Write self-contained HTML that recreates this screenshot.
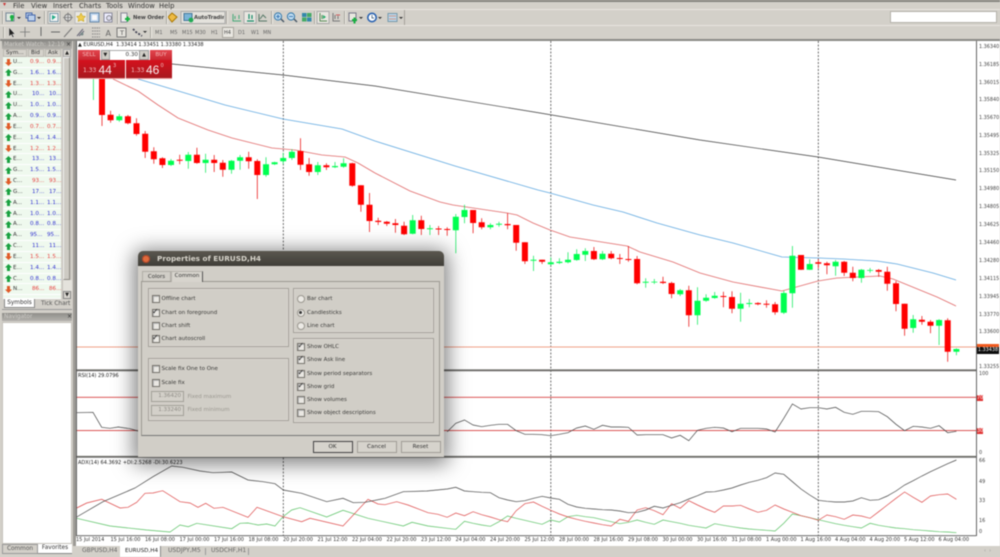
<!DOCTYPE html>
<html><head><meta charset="utf-8"><style>
html,body{margin:0;padding:0;background:#d3d0c9;overflow:hidden}
#r{position:relative;width:1000px;height:557px;overflow:hidden;background:#d3d0c9;font-family:"DejaVu Sans","Liberation Sans",sans-serif;color:#333;filter:blur(.42px)}
#r div,#r span.a,#r svg.a{position:absolute}
.t{white-space:nowrap}
.m{top:1.5px;font-size:6.8px;line-height:8px;color:#333}
.tb{font-size:5px;top:29px;line-height:8px;color:#666}
.sep{width:1px;background:#aaa7a0;border-right:1px solid #efece6}
.hl{background:#e9e7e1;border:1px solid #a9a69f;box-sizing:border-box}
.row{left:3px;width:58px;height:10.83px;background:#eff9ee;border-bottom:1px solid #fff;box-sizing:border-box}
.c{top:0;font-size:5.6px;line-height:10px;white-space:nowrap}
.b{color:#3030d0}.d{color:#e84040}
.p{left:979px;font-size:4.9px;line-height:6px;color:#444;white-space:nowrap}
.x{top:537px;font-size:5px;line-height:6px;color:#333;white-space:nowrap}
.gb{border:1px solid #a3a099;box-shadow:inset 0 0 0 .5px #e6e3dc;box-sizing:border-box}
.cb{width:6px;height:6px;background:#e9e7e2;border:1px solid #77746e;box-shadow:inset 1px 1px 0 #bbb;box-sizing:content-box}
.rd{width:6px;height:6px;background:#eceae5;border:1px solid #9a978f;border-radius:50%}
.l{font-size:5.5px;line-height:8px;color:#3a3a38;white-space:nowrap}
.bt{top:441px;height:12px;width:40px;box-sizing:border-box;border:1px solid #a09d96;background:#d6d3cc;font-size:5.6px;line-height:11px;text-align:center;color:#333}
.ct{top:547px;font-size:6px;line-height:8px;color:#444;white-space:nowrap}
.n{font-family:"Liberation Sans",sans-serif;font-size:12px;line-height:14px;color:#f8eeee;top:62.500px;white-space:nowrap}
</style></head><body><div id="r">
<svg width="0" height="0" style="position:absolute"><defs>
<symbol id="u" viewBox="0 0 7 7"><path d="M3.5 0 7 3.5H5V7H2V3.5H0z" fill="#19a040"/></symbol>
<symbol id="o" viewBox="0 0 7 7"><path d="M3.5 7 7 3.5H5V0H2V3.5H0z" fill="#e05a28"/></symbol>
</defs></svg>

<!-- top -->
<div style="left:0;top:0;width:1000px;height:1.5px;background:#85847f"></div>
<div style="left:0;top:9px;width:1000px;height:1px;background:#e8e5df"></div>
<div style="left:0;top:25px;width:1000px;height:1px;background:#e8e5df"></div>
<div style="left:0;top:38.5px;width:1000px;height:2px;background:#8a8985"></div>
<div style="left:3px;top:2px;width:3px;height:6px;color:#c33;font-size:6px;line-height:6px">▾</div>
<div class="m t" style="left:13px">File</div><div class="m t" style="left:31px">View</div><div class="m t" style="left:53px">Insert</div><div class="m t" style="left:79px">Charts</div><div class="m t" style="left:106px">Tools</div><div class="m t" style="left:128px">Window</div><div class="m t" style="left:159px">Help</div>

<!-- toolbar 1 -->
<div style="left:404px;top:10px;width:1px;height:15px;background:#a5a29b"></div>
<div class="sep" style="left:2px;top:11px;height:13px"></div>
<svg class="a" style="left:0;top:10px" width="405" height="15" viewBox="0 10 405 15">
<rect x="6" y="13" width="8" height="8" fill="#dfe8e0" stroke="#789"/><path d="M10 17h4M12 15v6" stroke="#18b040" stroke-width="2.4"/>
<path d="M17 17h4l-2 2z" fill="#333"/>
<rect x="26" y="13" width="6" height="5" fill="#bcd0ea" stroke="#46a"/><rect x="28" y="15" width="7" height="6" fill="#bcd0ea" stroke="#46a"/><path d="M37 17h4l-2 2z" fill="#333"/>
<rect x="48" y="11.5" width="12" height="12" fill="#e9e7e1" stroke="#aaa"/><rect x="50" y="13.5" width="8" height="8" fill="#f5f5f5" stroke="#79a"/><path d="M52 15l4 2-4 3z" fill="#2a8"/>
<circle cx="68" cy="17.5" r="3.4" fill="#ddd" stroke="#777"/><path d="M68 12.5v10M63 17.5h10" stroke="#777" stroke-width=".8"/>
<rect x="75" y="11.5" width="12" height="12" fill="#e9e7e1" stroke="#bbb"/><path d="M81 13l1.500 3 3 .5-2.200 2 .6 3-2.900-1.500-2.900 1.500.6-3-2.200-2 3-.5z" fill="#f0cc50" stroke="#b90" stroke-width=".5"/>
<rect x="90" y="13" width="9" height="9" fill="#bcd4ee" stroke="#68a"/><rect x="92" y="15" width="5" height="5" fill="#f8f8f8"/>
<rect x="104" y="13" width="8" height="9" fill="#eef" stroke="#889"/><circle cx="109" cy="18" r="2.400" fill="#dde" stroke="#666" stroke-width=".7"/>
<rect x="121" y="13" width="6" height="9" fill="#eee" stroke="#889"/><path d="M125 19h5M127.500 16.500v5" stroke="#18b040" stroke-width="2"/>
<path d="M172 13l5 4-5 5-4-5z" fill="#eebb44" stroke="#a70"/>
<rect x="181" y="11.500" width="44" height="12" fill="#e4e2dc" stroke="#aaa"/><rect x="184" y="13.500" width="8" height="7" fill="#7ab4d8" stroke="#479"/><circle cx="191" cy="20" r="2.400" fill="#2a5"/>
<path d="M233 14v7h8M235 16v3M239 15v4" stroke="#4a7" fill="none"/>
<rect x="244" y="11.500" width="12" height="12" fill="#e9e7e1" stroke="#aaa"/><path d="M247 21h7M249 14v5M252 15v4" stroke="#186" fill="none" stroke-width="1.200"/>
<path d="M259 14v7h8M260 19l3-4 3 3" stroke="#576" fill="none"/>
<circle cx="278" cy="16.500" r="3.600" fill="#bfdcf0" stroke="#37a"/><path d="M281 19l3 3" stroke="#456" stroke-width="1.400"/><path d="M276 16.500h4M278 14.500v4" stroke="#26a" stroke-width=".8"/>
<circle cx="291" cy="16.500" r="3.600" fill="#bfdcf0" stroke="#37a"/><path d="M294 19l3 3" stroke="#456" stroke-width="1.400"/><path d="M289 16.500h4" stroke="#26a" stroke-width=".8"/>
<rect x="302" y="13" width="4.500" height="4" fill="#38a"/><rect x="307" y="13" width="4.500" height="4" fill="#4a6"/><rect x="302" y="17.500" width="4.500" height="4" fill="#4a6"/><rect x="307" y="17.500" width="4.500" height="4" fill="#38a"/>
<rect x="317" y="11.500" width="12" height="12" fill="#e9e7e1" stroke="#aaa"/><path d="M320 13v8h7M322 15v4" stroke="#585" fill="none"/><path d="M323 15l3 2-3 2z" fill="#2a6"/>
<path d="M333 13v8h7M335 15v4M338 16v3" stroke="#777" fill="none"/><path d="M336 15h4" stroke="#c55"/>
<rect x="349" y="13" width="7" height="8" fill="#e8e8e0" stroke="#778"/><path d="M352 20h5M354.500 17.500v6" stroke="#18b040" stroke-width="2"/><path d="M359 17h4l-2 2z" fill="#333"/>
<circle cx="372" cy="17.500" r="4.200" fill="#fff" stroke="#2a62b0" stroke-width="1.600"/><path d="M372 15v3h2" stroke="#246" fill="none" stroke-width=".7"/><path d="M378 17h4l-2 2z" fill="#333"/>
<rect x="388" y="13.500" width="9" height="8" fill="#bcd6ec" stroke="#79a"/><path d="M389 16h7M389 19h7" stroke="#c98"/><path d="M399 17h4l-2 2z" fill="#333"/>
</svg>
<div class="t" style="left:133px;top:13.500px;font-size:5.300px;line-height:8px;font-weight:bold;color:#444;letter-spacing:-.1px">New Order</div>
<div class="t" style="left:194px;top:13.500px;font-size:5.300px;line-height:8px;font-weight:bold;color:#444;letter-spacing:-.1px;width:30px;overflow:hidden">AutoTrading</div>
<div class="sep" style="left:44px;top:11px;height:13px"></div><div class="sep" style="left:117px;top:11px;height:13px"></div><div class="sep" style="left:166px;top:11px;height:13px"></div><div class="sep" style="left:226px;top:11px;height:13px"></div><div class="sep" style="left:271px;top:11px;height:13px"></div><div class="sep" style="left:314px;top:11px;height:13px"></div><div class="sep" style="left:344px;top:11px;height:13px"></div>
<div style="left:890px;top:11px;width:107px;height:12px;background:#fff;border:1px solid #b5b2ab;box-sizing:border-box"></div>

<!-- toolbar 2 -->
<div class="sep" style="left:3px;top:27px;height:11px"></div>
<svg class="a" style="left:0;top:26px" width="150" height="13" viewBox="0 26 150 13">
<path d="M9 27.500v9l2.200-2 1.500 3 1.200-.6-1.500-2.800H15z" fill="#222" stroke="#eee" stroke-width=".4"/>
<path d="M25 27v10M20 32h10" stroke="#777" stroke-width=".8"/>
<path d="M41 27v9" stroke="#666"/><path d="M51 32h9" stroke="#666"/><path d="M64 37l8-9" stroke="#777"/>
<path d="M77 36l6-7M79 36l5-5" stroke="#667"/><circle cx="82" cy="34" r="1.500" fill="#788"/>
<path d="M92 28h8M92 31h8M92 34h8M92 37h8" stroke="#888" stroke-dasharray="1.500 .8"/>
<rect x="117" y="28" width="9" height="9" fill="#e4e2dc" stroke="#777"/>
<path d="M133 29l3 3 3 2 3 2" stroke="#445" stroke-width="1.800" stroke-dasharray="2 1.500" fill="none"/><path d="M143 31h4l-2 2z" fill="#333"/>
</svg>
<div class="t" style="left:105.500px;top:28.500px;font-size:8px;line-height:9px;color:#666">A</div>
<div class="t" style="left:120px;top:29.500px;font-size:6.500px;line-height:7px;color:#555">T</div>
<div class="sep" style="left:150px;top:27px;height:11px"></div>
<div class="hl" style="left:221.500px;top:27px;width:12px;height:11px"></div>
<div class="tb" style="left:155px">M1</div><div class="tb" style="left:170px">M5</div><div class="tb" style="left:182px">M15</div><div class="tb" style="left:195px">M30</div><div class="tb" style="left:211px">H1</div><div class="tb" style="left:224px;color:#444">H4</div><div class="tb" style="left:238px">D1</div><div class="tb" style="left:251px">W1</div><div class="tb" style="left:263px">MN</div>

<!-- market watch -->
<div style="left:2px;top:41px;width:70px;height:8px;background:linear-gradient(#8f8e8a,#b3b1ac)"></div>
<div class="t" style="left:4px;top:41px;font-size:5.800px;line-height:8px;color:#cfcdc8">Market Watch: 12:19</div>
<div class="t" style="left:66px;top:41px;font-size:6px;line-height:8px;color:#333">×</div>
<div style="left:3px;top:49px;width:24px;height:8px;background:#d6d3cc;border:1px solid #bdbab3;box-sizing:border-box"></div>
<div style="left:28px;top:49px;width:16px;height:8px;background:#d6d3cc;border:1px solid #bdbab3;box-sizing:border-box"></div>
<div style="left:45px;top:49px;width:16px;height:8px;background:#d6d3cc;border:1px solid #bdbab3;box-sizing:border-box"></div>
<div class="t" style="left:6px;top:49px;font-size:5.600px;line-height:8px">Sym...</div><div class="t" style="left:31px;top:49px;font-size:5.600px;line-height:8px">Bid</div><div class="t" style="left:48px;top:49px;font-size:5.600px;line-height:8px">Ask</div>
<div style="left:62px;top:49px;width:9px;height:250px;background:#c6c3bc"></div>
<div style="left:63px;top:49px;width:8px;height:8px;background:#dad7d0;border:1px solid #aaa;box-sizing:border-box;font-size:5px;line-height:6px;text-align:center;color:#222">▲</div>
<div style="left:63px;top:57px;width:7px;height:223px;background:#cdcac3;border:1px solid #8e8b85;border-left-color:#eee;border-top-color:#eee;box-sizing:border-box"></div>
<div style="left:63px;top:280px;width:9px;height:11px;background:#e4e2dc"></div>
<div style="left:63px;top:291px;width:8px;height:8px;background:#dad7d0;border:1px solid #888;box-sizing:border-box;font-size:5px;line-height:6px;text-align:center;color:#222">▼</div>

<div class="row" style="top:57px"><svg class="a" style="left:2px;top:1.500px" width="7" height="7"><use href="#o"/></svg><span class="c a" style="left:10px">U...</span><span class="c a d" style="left:27px">0.9...</span><span class="c a d" style="left:44px">0.9...</span></div>
<div class="row" style="top:67.830px"><svg class="a" style="left:2px;top:1.500px" width="7" height="7"><use href="#u"/></svg><span class="c a" style="left:10px">G...</span><span class="c a b" style="left:27px">1.6...</span><span class="c a b" style="left:44px">1.6...</span></div>
<div class="row" style="top:78.660px"><svg class="a" style="left:2px;top:1.500px" width="7" height="7"><use href="#o"/></svg><span class="c a" style="left:10px">E...</span><span class="c a d" style="left:27px">1.3...</span><span class="c a d" style="left:44px">1.3...</span></div>
<div class="row" style="top:89.490px"><svg class="a" style="left:2px;top:1.500px" width="7" height="7"><use href="#u"/></svg><span class="c a" style="left:10px">U...</span><span class="c a b" style="left:29px">10...</span><span class="c a b" style="left:46px">10...</span></div>
<div class="row" style="top:100.320px"><svg class="a" style="left:2px;top:1.500px" width="7" height="7"><use href="#u"/></svg><span class="c a" style="left:10px">U...</span><span class="c a b" style="left:27px">1.0...</span><span class="c a b" style="left:44px">1.0...</span></div>
<div class="row" style="top:111.150px"><svg class="a" style="left:2px;top:1.500px" width="7" height="7"><use href="#u"/></svg><span class="c a" style="left:10px">A...</span><span class="c a b" style="left:27px">0.9...</span><span class="c a b" style="left:44px">0.9...</span></div>
<div class="row" style="top:121.980px"><svg class="a" style="left:2px;top:1.500px" width="7" height="7"><use href="#o"/></svg><span class="c a" style="left:10px">E...</span><span class="c a d" style="left:27px">0.7...</span><span class="c a d" style="left:44px">0.7...</span></div>
<div class="row" style="top:132.810px"><svg class="a" style="left:2px;top:1.500px" width="7" height="7"><use href="#u"/></svg><span class="c a" style="left:10px">E...</span><span class="c a b" style="left:27px">1.4...</span><span class="c a b" style="left:44px">1.4...</span></div>
<div class="row" style="top:143.640px"><svg class="a" style="left:2px;top:1.500px" width="7" height="7"><use href="#o"/></svg><span class="c a" style="left:10px">E...</span><span class="c a d" style="left:27px">1.2...</span><span class="c a d" style="left:44px">1.2...</span></div>
<div class="row" style="top:154.470px"><svg class="a" style="left:2px;top:1.500px" width="7" height="7"><use href="#u"/></svg><span class="c a" style="left:10px">E...</span><span class="c a b" style="left:29px">13...</span><span class="c a b" style="left:46px">13...</span></div>
<div class="row" style="top:165.300px"><svg class="a" style="left:2px;top:1.500px" width="7" height="7"><use href="#u"/></svg><span class="c a" style="left:10px">G...</span><span class="c a b" style="left:27px">1.5...</span><span class="c a b" style="left:44px">1.5...</span></div>
<div class="row" style="top:176.130px"><svg class="a" style="left:2px;top:1.500px" width="7" height="7"><use href="#o"/></svg><span class="c a" style="left:10px">C...</span><span class="c a d" style="left:29px">93...</span><span class="c a d" style="left:46px">93...</span></div>
<div class="row" style="top:186.960px"><svg class="a" style="left:2px;top:1.500px" width="7" height="7"><use href="#u"/></svg><span class="c a" style="left:10px">G...</span><span class="c a b" style="left:29px">17...</span><span class="c a b" style="left:46px">17...</span></div>
<div class="row" style="top:197.790px"><svg class="a" style="left:2px;top:1.500px" width="7" height="7"><use href="#u"/></svg><span class="c a" style="left:10px">A...</span><span class="c a b" style="left:27px">1.1...</span><span class="c a b" style="left:44px">1.1...</span></div>
<div class="row" style="top:208.620px"><svg class="a" style="left:2px;top:1.500px" width="7" height="7"><use href="#u"/></svg><span class="c a" style="left:10px">A...</span><span class="c a b" style="left:27px">1.0...</span><span class="c a b" style="left:44px">1.0...</span></div>
<div class="row" style="top:219.450px"><svg class="a" style="left:2px;top:1.500px" width="7" height="7"><use href="#u"/></svg><span class="c a" style="left:10px">A...</span><span class="c a b" style="left:27px">0.8...</span><span class="c a b" style="left:44px">0.8...</span></div>
<div class="row" style="top:230.280px"><svg class="a" style="left:2px;top:1.500px" width="7" height="7"><use href="#u"/></svg><span class="c a" style="left:10px">A...</span><span class="c a b" style="left:27px">95...</span><span class="c a b" style="left:44px">95...</span></div>
<div class="row" style="top:241.110px"><svg class="a" style="left:2px;top:1.500px" width="7" height="7"><use href="#u"/></svg><span class="c a" style="left:10px">C...</span><span class="c a b" style="left:29px">11...</span><span class="c a b" style="left:46px">11...</span></div>
<div class="row" style="top:251.940px"><svg class="a" style="left:2px;top:1.500px" width="7" height="7"><use href="#o"/></svg><span class="c a" style="left:10px">E...</span><span class="c a d" style="left:27px">1.5...</span><span class="c a d" style="left:44px">1.5...</span></div>
<div class="row" style="top:262.770px"><svg class="a" style="left:2px;top:1.500px" width="7" height="7"><use href="#u"/></svg><span class="c a" style="left:10px">E...</span><span class="c a b" style="left:27px">1.4...</span><span class="c a b" style="left:44px">1.4...</span></div>
<div class="row" style="top:273.600px"><svg class="a" style="left:2px;top:1.500px" width="7" height="7"><use href="#u"/></svg><span class="c a" style="left:10px">C...</span><span class="c a b" style="left:27px">0.8...</span><span class="c a b" style="left:44px">0.8...</span></div>
<div class="row" style="top:284.430px"><svg class="a" style="left:2px;top:1.500px" width="7" height="7"><use href="#o"/></svg><span class="c a" style="left:10px">N...</span><span class="c a d" style="left:29px">86...</span><span class="c a d" style="left:46px">86...</span></div>
<div class="row" style="top:295.260px;height:4px"></div>

<div style="left:4px;top:299px;width:31px;height:9px;background:#fff;border:1px solid #888;border-top:none;box-sizing:border-box;text-align:center;font-size:5.800px;line-height:8px;color:#333">Symbols</div>
<div class="t" style="left:41px;top:300px;font-size:5.800px;line-height:8px;color:#555">Tick Chart</div>
<div style="left:2px;top:308.500px;width:70px;height:.8px;background:#999"></div>

<!-- navigator -->
<div style="left:2px;top:313px;width:70px;height:8px;background:linear-gradient(#8f8e8a,#b3b1ac)"></div>
<div class="t" style="left:4px;top:313px;font-size:5.800px;line-height:8px;color:#cfcdc8">Navigator</div>
<div class="t" style="left:67px;top:313px;font-size:6px;line-height:8px;color:#333">×</div>
<div style="left:2px;top:322px;width:70px;height:222px;background:#fff;border:1px solid #c4c1ba;box-sizing:border-box"></div>

<!-- chart area -->
<div style="left:73px;top:41px;width:3px;height:505px;background:#9c9a95"></div>
<div style="left:76px;top:41px;width:924px;height:505px;background:#fff"></div>
<svg class="a" style="left:0;top:0" width="1000" height="557" viewBox="0 0 1000 557" fill="none">
<path d="M283.300 41V536M550.800 41V536M818.300 41V536" stroke="#333" stroke-width=".7" stroke-dasharray="2 1.500"/>
<path d="M76 347H976" stroke="#f0a088" stroke-width=".9"/>
<path d="M172 64L283 75 375 86 540 113 700 140 818 157 956 180" stroke="#3a3a3a" stroke-width=".7"/>
<path d="M138 79L175 90 225 105 283 119 342 129 375 141 455 166 538 190 550 193 593 205 623 212 657 223 700 235 733 243 782 257 818 258 843 259 877 261 897 264 933 273 956 280" stroke="#5fa8e0" stroke-width=".8"/>
<path d="M113 79L138 91 158 105 178 118 208 130 232 138 248 142 272 148 295 150 322 155 345 157 358 163 375 173 410 191 440 202 453 205 507 213 517 215 533 223 550 230 570 237 627 246 640 252 673 262 700 273 733 282 782 291 818 281 837 278 880 276 893 279 937 297 956 306" stroke="#e06868" stroke-width=".8"/>
<!-- green wicks -->
<path stroke="#00e850" stroke-width=".7" d="M93.400 79V100M119.300 114V121.700M171 159V166M188.300 152V168.700M205.600 153.700V172.700M231.500 160V173.700M240.100 155V169.700M266 157.300V176.700M274.600 161.700V165M283.200 152.700V164.300M291.900 149.300V160M317.800 162V175M335 162V168M343.600 158.300V167.700M412.700 215V234.300M429.900 225V235M455.800 214V253.300M464.500 204.700V223.300M490.400 223.300V229.300M499 221.700V226.700M533.500 255.700V271M550.800 257.300V265.300M559.400 258.300V264M568 252.300V263.300M576.700 249.300V260.700M585.300 248.300V261M602.500 251V260M645.700 278.300V287.700M654.300 279V284M680.200 289V296M697.500 287.300V324.700M706.100 294.300V301.700M714.700 292V298.700M740.600 292.700V321.700M749.300 299V307.300M783.800 290.700V314M792.400 246V307.700M809.700 259.300V270M835.600 260V275.700M861.400 269V282.700M870.100 268V272.700M913.200 315V332.700M939.100 319.300V345M956.400 348.300V355.300"/>
<!-- green bodies -->
<path stroke="#00ff50" stroke-width="6" d="M119.300 116.300V120.300M171 160.700V165M188.300 154.700V161M205.600 159.700V163M231.500 160.700V169.700M240.100 157.300V160.700M266 164.300V175M274.600 162.300V164.300M283.200 158V161.300M291.900 151.700V158M317.800 165.300V172M335 166V167.300M343.600 163.300V166.700M412.700 220.300V233.700M429.900 228.300V229.300M455.800 216.700V230.300M464.500 210V217M490.400 225V227.300M499 223.700V224.700M533.500 259.700V260.700M550.800 262.300V264.300M559.400 261.700V263M568 259.700V262.300M576.700 254V260M585.300 251V254.700M602.500 253.700V259.300M645.700 281.700V282.700M654.300 281.700V282.500M680.200 290.300V294.300M697.500 300.700V315.300M706.100 297.700V300.700M714.700 295.700V298M740.600 303.700V308.700M749.300 303V304M783.800 293V312.700M792.400 255.700V293.300M809.700 264V269.700M835.600 261.700V266.300M861.400 269.700V278M870.100 270V270.700M913.200 319.300V328M939.100 320V325.700M956.400 349V351.700"/>
<!-- red wicks -->
<path stroke="#e80000" stroke-width=".7" d="M102 79V126M110.600 110.700V122.700M127.900 115V124.300M136.500 118.300V135.700M145.200 131V158M153.800 147.300V163.700M162.400 157.300V168M179.700 154.700V164.300M196.900 147.700V163.700M214.200 155V172M222.800 160V176.700M248.700 151.700V168.700M257.300 159.300V199M300.500 138.300V170M309.100 158V175.700M326.400 163.300V170M352.300 162.700V186.700M360.900 185.300V211.700M369.500 193V232M378.200 217.700V225M386.800 221V226M395.400 219V232.700M404.100 221.700V235M421.300 215.700V235M438.600 226V235M447.200 227.300V235.700M473.100 210V233.300M481.700 218.300V229.300M507.600 213.300V229.300M516.200 225V250.700M524.900 242.300V264M542.100 259.700V264M593.900 247V260M611.200 251V259.300M619.800 254V264M628.400 246V261.700M637.100 256V284.300M663 276.700V284M671.600 281.700V298.300M688.800 285.700V326.700M723.400 291.700V307.300M732 291.300V313.300M757.900 302.300V305.300M766.500 300.300V307.700M775.100 302V314.700M801 255V270M818.300 259.300V268.300M826.900 261.700V274.300M844.200 261V276M852.800 266.700V281.300M878.700 269V276.700M887.300 266.700V290.700M896 281V311.300M904.600 303.700V335.700M921.900 316V324.700M930.500 320V333.300M947.700 318.300V361.700"/>
<!-- red bodies -->
<path stroke="#ff0000" stroke-width="6" d="M102 79V115M110.600 114.700V120.300M127.900 116.300V123.300M136.500 123.300V134M145.200 133.700V151.700M153.800 151.300V159.300M162.400 158.300V165M179.700 159.700V160.700M196.900 154.700V163M214.200 159.700V163M222.800 162.700V169.700M248.700 157.300V161.300M257.300 161V175M300.500 151V164.700M309.100 164.300V172M326.400 165.300V167.300M352.300 163.300V185.700M360.900 185.300V204.700M369.500 204.700V221M378.200 220.700V222M386.800 221.700V223.700M395.400 223.300V225M404.100 225.700V234.300M421.300 220.300V229M438.600 228.500V229.500M447.200 229V230M473.100 210V223M481.700 222.300V227.300M507.600 224V225.300M516.200 225V242.700M524.900 242.300V261.300M542.100 259.700V261.700M593.900 251V259.300M611.200 253.700V258.300M619.800 258V259M628.400 259V260M637.100 259V283.300M663 281.700V283M671.600 283V294M688.800 290.300V315.300M723.400 296V297M732 297V308.700M757.900 303V304.300M766.500 303.700V304.700M775.100 304.300V312.300M801 255V269.700M818.300 262.300V263.700M826.900 263.300V265.300M844.200 261.700V272.700M852.800 272.700V278M878.700 270V271.700M887.300 271.700V283.700M896 283.300V304M904.600 303.700V328.700M921.900 319.700V321.700M930.500 321.700V325.700M947.700 320.300V351.700"/>
<!-- window separators -->
<path d="M76 370.300H976M76 456.800H976" stroke="#6d6c69" stroke-width="1.800"/>
<path d="M76 397.300H976M76 430.600H976" stroke="#d84040" stroke-width=".9"/>
<!-- RSI -->
<path stroke="#444" stroke-width=".7" d="M76.700 412.700L93 412.300 101.700 427.300 110 428.300 118.300 427 130 428.700 138 431M447.200 431.700L455.800 423.300 464.500 420 473.100 425 481.700 426.700 490.400 425.300 499 424.300 507.600 424.300 516.200 430.700 524.900 434.300 533.500 434.300 542.100 434.700 550.800 435.700 559.400 434.300 568 432.700 576.700 428 585.300 426 593.900 429.300 602.500 425.300 611.200 427 619.800 427 628.400 427.300 637.100 435 645.700 434.700 654.300 434.700 663 434.700 671.600 438 680.200 435.300 688.800 440.700 697.500 430.300 706.100 428.300 714.700 427.300 723.400 428 732 431.700 740.600 428.300 749.300 428.300 757.900 428.300 766.500 429 775.100 432 783.800 418.300 792.400 404 801 409 809.700 407.700 818.300 407.700 826.900 409 835.600 407.300 844.200 412.300 852.800 414.300 861.400 411.300 870.100 411.300 878.700 411.700 887.300 416.700 896 424.300 904.600 430.700 913.200 426.300 921.900 427 930.500 428.300 939.100 425.700 947.700 432.700 956.400 431.300"/>
<!-- ADX -->
<path stroke="#55c060" stroke-width=".7" d="M76.700 518.300L110 526 146.700 530 170 532 180 525 188.300 526.700 196.700 523.300 231.700 528.700 240 523.300 248 523 258 525 266.700 524 275 526 283 516.700 291.700 510 300 507.700 326.700 517 343 510.300 368 518.300 403.300 526 412 522.300 428 526 447.200 528.300 455.800 529.300 464.500 521.300 473.100 523.300 481.700 525 490.400 526.300 499 521.700 507.600 516 516.200 518.300 524.900 520.300 533.500 522.300 542.100 524.300 550.800 520 559.400 522 568 516.700 576.700 515.300 585.300 516.700 593.900 517.700 602.500 519.700 611.200 521.700 619.800 523.700 628.400 522.300 637.100 520 645.700 522.300 654.300 524.300 663 520 671.600 521.700 680.200 523.300 688.800 525.300 697.500 526.700 706.100 528 714.700 523.700 723.400 525.300 732 526.700 740.600 528 749.300 529 757.900 529.700 766.500 530.300 775.100 531 783.800 523.300 792.400 514 801 515.700 809.700 517.700 818.300 519.700 826.900 521.700 835.600 523.700 844.200 525.300 852.800 526.700 861.400 528 870.100 523.300 878.700 525.300 887.300 526.700 896 528 904.600 528.700 913.200 529.700 921.900 530.300 930.500 531 939.100 531.700 947.700 532 956.400 532.700"/>
<path stroke="#dd4848" stroke-width=".7" d="M76.700 508L86.700 503 101.700 499.300 120 508 128 507.300 136.700 502.300 145 493.300 153 493 162.700 490.700 180 501.700 190 503 198 507.300 205.700 503.300 214 508.300 223 507.300 248 517.300 257 507.300 283 516.700 301.700 521.700 310 518.300 343 526 368 499.300 378 504 385 504.700 396.700 501.700 408 505 428 512.700 438 514.300 447.200 517.300 455.800 513 464.500 515.700 473.100 511.700 481.700 514.700 490.400 517 499 519.700 507.600 521.700 516.200 510.700 524.900 503.700 533.500 502 542.100 506.300 550.800 510.300 559.400 514 568 517 576.700 519.300 585.300 521.300 593.900 523 602.500 524.700 611.200 526 619.800 519.300 628.400 521.300 637.100 510 645.700 507.700 654.300 510.700 663 514.700 671.600 503.700 680.200 508.300 688.800 500.700 697.500 505 706.100 509 714.700 512.300 723.400 506 732 506 740.600 505.300 749.300 509 757.900 512.300 766.500 510.300 775.100 505 783.800 509 792.400 512.300 801 515.700 809.700 517.700 818.300 520.300 826.900 515 835.600 516.700 844.200 519.300 852.800 515 861.400 516 870.100 518.300 878.700 511.700 887.300 505 896 498.300 904.600 492 913.200 497.300 921.900 502.300 930.500 496 939.100 494.700 947.700 494 956.400 499.300"/>
<path stroke="#444" stroke-width=".7" d="M76.700 517L103 501.700 135 488 153 476.700 171.700 466 183 467.300 200 471 213 472.700 231.700 472 248 480 263 481.700 275 483.700 283.300 490 301.700 493.300 326.700 501.700 343 498.300 353.300 502.700 365 502.300 385 498.300 403.300 491.700 426.700 491 447.200 489 455.800 487.300 464.500 491 473.100 491.700 481.700 492.300 490.400 492.700 499 497.700 507.600 500 516.200 501.700 524.900 500.700 533.500 498.300 542.100 496.300 550.800 498 559.400 499.300 568 504.300 576.700 507 585.300 508.300 593.900 509 602.500 509.700 611.200 510 619.800 511 628.400 512.700 637.100 512.300 645.700 510 654.300 506.300 663 508 671.600 505.300 680.200 502.700 688.800 499 697.500 495.700 706.100 492 714.700 491.700 723.400 490 732 488 740.600 485 749.300 482.300 757.900 480.300 766.500 477.700 775.100 473 783.800 474.300 792.400 481.700 801 489 809.700 495 818.300 500.300 826.900 501.300 835.600 502 844.200 502 852.800 501 861.400 497.700 870.100 500.300 878.700 499.700 887.300 496 896 491 904.600 485 913.200 480.700 921.900 476 930.500 471.700 939.100 467.700 947.700 463.700 956.400 460"/>
<path d="M76.500 41V536M976.500 41V536M76 535.700H976" stroke="#555" stroke-width=".9"/>
</svg>

<!-- labels -->
<div class="t" style="left:78px;top:42px;font-size:5px;line-height:7px;color:#222">▲ EURUSD,H4 &nbsp;1.33414 1.33451 1.33380 1.33438</div>
<div class="t" style="left:78px;top:373px;font-size:5px;line-height:6px;color:#222">RSI(14) 29.0796</div>
<div class="t" style="left:78px;top:459.500px;font-size:5px;line-height:6px;color:#222">ADX(14) 64.3692 +DI:2.5268 -DI:30.6223</div>

<div class="p" style="top:44px">1.36340</div><div class="p" style="top:62px">1.36185</div><div class="p" style="top:80px">1.36015</div><div class="p" style="top:97px">1.35840</div><div class="p" style="top:115px">1.35670</div><div class="p" style="top:133px">1.35495</div><div class="p" style="top:151px">1.35325</div><div class="p" style="top:168px">1.35150</div><div class="p" style="top:186px">1.34980</div><div class="p" style="top:204px">1.34805</div><div class="p" style="top:222px">1.34625</div><div class="p" style="top:240px">1.34460</div><div class="p" style="top:258px">1.34280</div><div class="p" style="top:276px">1.34115</div><div class="p" style="top:293.500px">1.33945</div><div class="p" style="top:311.500px">1.33770</div><div class="p" style="top:329px">1.33600</div><div class="p" style="top:364px">1.33255</div>
<div style="left:977px;top:343.500px;width:22px;height:4px;background:#f05a1e"></div>
<div class="p" style="left:977px;top:346.500px;width:22px;height:7px;background:#0c0c0c;color:#fff;text-align:center;line-height:7px">1.33438</div>
<div class="p" style="top:371px">100</div><div class="p" style="top:450px">0</div>
<div class="p" style="left:977px;top:394.500px;width:6px;height:6px;background:#e03030;color:#fff;text-align:center">70</div>
<div class="p" style="left:977px;top:427.500px;width:6px;height:6px;background:#e03030;color:#fff;text-align:center">30</div>
<div class="p" style="top:458px">66</div><div class="p" style="top:479px">49</div><div class="p" style="top:498px">33</div><div class="p" style="top:518px">16</div><div class="p" style="top:529px">0</div>

<div class="x" style="left:76px">15 Jul 2014</div><div class="x" style="left:110.500px">15 Jul 16:00</div><div class="x" style="left:145px">16 Jul 08:00</div><div class="x" style="left:179.500px">17 Jul 00:00</div><div class="x" style="left:214px">17 Jul 16:00</div><div class="x" style="left:248.500px">18 Jul 08:00</div><div class="x" style="left:283px">20 Jul 20:00</div><div class="x" style="left:317.500px">21 Jul 12:00</div><div class="x" style="left:352px">22 Jul 04:00</div><div class="x" style="left:386.500px">22 Jul 20:00</div><div class="x" style="left:421px">23 Jul 12:00</div><div class="x" style="left:455.500px">24 Jul 04:00</div><div class="x" style="left:490px">24 Jul 20:00</div><div class="x" style="left:524.500px">25 Jul 12:00</div><div class="x" style="left:559px">28 Jul 00:00</div><div class="x" style="left:593.500px">28 Jul 16:00</div><div class="x" style="left:628px">29 Jul 08:00</div><div class="x" style="left:662.500px">30 Jul 00:00</div><div class="x" style="left:697px">30 Jul 16:00</div><div class="x" style="left:731.500px">31 Jul 08:00</div><div class="x" style="left:766px">1 Aug 00:00</div><div class="x" style="left:800.500px">1 Aug 16:00</div><div class="x" style="left:835px">4 Aug 04:00</div><div class="x" style="left:869.500px">4 Aug 20:00</div><div class="x" style="left:904px">5 Aug 12:00</div><div class="x" style="left:938.500px">6 Aug 04:00</div>

<!-- trade panel -->
<div style="left:78px;top:49.500px;width:22px;height:10px;background:linear-gradient(#e2454e,#c92831);color:#f5b8b8;font-size:5.600px;line-height:10px;text-align:center">SELL</div>
<div style="left:100.500px;top:49.500px;width:9.500px;height:10px;background:#cfccc5;border:1px solid #999;box-sizing:border-box;font-size:5px;line-height:8px;text-align:center;color:#222">▼</div>
<div style="left:110px;top:49.500px;width:29px;height:10px;background:#fff;border-top:1px solid #aaa;box-sizing:border-box;font-size:5.600px;line-height:9px;text-align:right;padding-right:1px;color:#333">0.30</div>
<div style="left:139px;top:49.500px;width:10px;height:10px;background:#cfccc5;border:1px solid #999;box-sizing:border-box;font-size:5px;line-height:8px;text-align:center;color:#222">▲</div>
<div style="left:150px;top:49.500px;width:22px;height:10px;background:linear-gradient(#e2454e,#c92831);color:#f5b8b8;font-size:5.600px;line-height:10px;text-align:center">BUY</div>
<div style="left:78px;top:60px;width:46.500px;height:18.500px;background:linear-gradient(#d5111d,#a8191f);border-bottom:1px solid #e9a0a0;box-sizing:border-box"></div>
<div style="left:126px;top:60px;width:46px;height:18.500px;background:linear-gradient(#d5111d,#a8191f);border-bottom:1px solid #e9a0a0;box-sizing:border-box"></div>
<div class="t" style="left:83px;top:66.500px;font-size:6px;line-height:8px;color:#f2c0c0">1.33</div>
<div class="n" style="left:98.500px">44</div>
<div class="t" style="left:113px;top:63px;font-size:5px;line-height:6px;color:#f2c0c0">3</div>
<div class="t" style="left:131px;top:66.500px;font-size:6px;line-height:8px;color:#f2c0c0">1.33</div>
<div class="n" style="left:146px">46</div>
<div class="t" style="left:160.500px;top:63px;font-size:5px;line-height:6px;color:#f2c0c0">0</div>

<!-- bottom tabs -->
<div style="left:0;top:546px;width:1000px;height:11px;background:#d3d0c9"></div>
<div style="left:120px;top:546px;width:41px;height:11px;background:#fff;border-right:1px solid #888;box-sizing:border-box"></div>
<div style="left:2px;top:544px;width:36px;height:10px;background:#d3d0c9;border:1px solid #999;box-sizing:border-box;text-align:center;font-size:5.800px;line-height:9px;color:#555">Common</div>
<div style="left:38px;top:544px;width:34px;height:10px;background:#fff;border-bottom:1px solid #888;box-sizing:border-box;text-align:center;font-size:5.800px;line-height:9px;color:#333">Favorites</div>
<div class="ct" style="left:82px;color:#666">GBPUSD,H4</div><div class="ct" style="left:125px;color:#222;font-size:5.600px">EURUSD,H4</div><div class="ct" style="left:168px;color:#666">USDJPY,M5</div><div class="ct" style="left:211px;color:#666">USDCHF,H1</div>
<div style="left:205px;top:548px;width:1px;height:7px;background:#999"></div><div style="left:248px;top:548px;width:1px;height:7px;background:#999"></div>
<div class="ct" style="left:984px;color:#999;font-size:5px">‹ &nbsp;›</div>

<!-- dialog -->
<div style="left:138px;top:251px;width:306px;height:206px;background:#d1cec7;border-radius:5px 5px 0 0;box-shadow:0 3px 20px 4px rgba(0,0,0,.5)"></div>
<div style="left:138px;top:251px;width:306px;height:15px;background:linear-gradient(#5a574f,#403e38);border-radius:5px 5px 0 0"></div>
<div style="left:142px;top:255px;width:8px;height:8px;border-radius:50%;background:#e06a3c;box-shadow:inset 0 0 0 1px #a8452a"></div>
<div class="t" style="left:157px;top:254px;font-size:7.300px;line-height:10px;font-weight:bold;color:#d8d5cc">Properties of EURUSD,H4</div>

<div style="left:141px;top:281px;width:299px;height:155px;border:1px solid #9c9992;border-bottom:1.500px solid #777;box-sizing:border-box"></div>
<div class="t" style="left:142px;top:271px;width:29px;height:10px;border:1px solid #b0ada6;border-bottom:none;box-sizing:border-box;font-size:5.500px;line-height:10px;text-align:center;color:#333">Colors</div>
<div class="t" style="left:171px;top:270.500px;width:32px;height:11px;background:#d7d4cd;border:1px solid #b5b2ab;border-right:1.500px solid #555;border-bottom:none;box-sizing:border-box;font-size:5.500px;line-height:9px;text-align:center;color:#333">Common</div>

<div class="gb" style="left:147.500px;top:288px;width:141px;height:59px"></div>
<div class="gb" style="left:147.500px;top:358px;width:141px;height:63px"></div>
<div class="gb" style="left:292.500px;top:288px;width:141.500px;height:45px"></div>
<div class="gb" style="left:292.500px;top:338px;width:141.500px;height:84.500px"></div>

<div class="cb" style="left:151.500px;top:295px"></div><div class="l" style="left:161.500px;top:295px">Offline chart</div>
<div class="cb" style="left:151.500px;top:308.500px"></div><div class="t" style="left:152px;top:306.500px;font-size:8px;line-height:10px;color:#222">✓</div><div class="l" style="left:161.500px;top:308.500px">Chart on foreground</div>
<div class="cb" style="left:151.500px;top:321.500px"></div><div class="l" style="left:161.500px;top:321.500px">Chart shift</div>
<div class="cb" style="left:151.500px;top:335px"></div><div class="t" style="left:152px;top:333px;font-size:8px;line-height:10px;color:#222">✓</div><div class="l" style="left:161.500px;top:335px">Chart autoscroll</div>

<div class="cb" style="left:151.500px;top:365px"></div><div class="l" style="left:161.500px;top:365px">Scale fix One to One</div>
<div class="cb" style="left:151.500px;top:378.500px"></div><div class="l" style="left:161.500px;top:378.500px">Scale fix</div>
<div style="left:151px;top:391px;width:33px;height:11px;border:1px solid #a3a099;background:#d3d0c9;box-sizing:border-box;font-size:5.500px;line-height:9px;text-align:right;padding-right:2px;color:#8e8b85">1.36420</div>
<div class="l" style="left:187.500px;top:393px;color:#9b9891">Fixed maximum</div>
<div style="left:151px;top:404.500px;width:33px;height:11px;border:1px solid #a3a099;background:#d3d0c9;box-sizing:border-box;font-size:5.500px;line-height:9px;text-align:right;padding-right:2px;color:#8e8b85">1.33240</div>
<div class="l" style="left:187.500px;top:406px;color:#9b9891">Fixed minimum</div>

<div class="rd" style="left:296.500px;top:295px"></div><div class="l" style="left:307px;top:295px">Bar chart</div>
<div class="rd" style="left:296.500px;top:308.500px"></div><div style="left:299px;top:311px;width:3px;height:3px;background:#333;border-radius:50%"></div><div class="l" style="left:307px;top:308.500px">Candlesticks</div>
<div class="rd" style="left:296.500px;top:321.500px"></div><div class="l" style="left:307px;top:321.500px">Line chart</div>

<div class="cb" style="left:297px;top:343px"></div><div class="t" style="left:297.500px;top:341px;font-size:8px;line-height:10px;color:#222">✓</div><div class="l" style="left:307px;top:343px">Show OHLC</div>
<div class="cb" style="left:297px;top:356px"></div><div class="t" style="left:297.500px;top:354px;font-size:8px;line-height:10px;color:#222">✓</div><div class="l" style="left:307px;top:356px">Show Ask line</div>
<div class="cb" style="left:297px;top:369.500px"></div><div class="t" style="left:297.500px;top:367.500px;font-size:8px;line-height:10px;color:#222">✓</div><div class="l" style="left:307px;top:369.500px">Show period separators</div>
<div class="cb" style="left:297px;top:382.500px"></div><div class="t" style="left:297.500px;top:380.500px;font-size:8px;line-height:10px;color:#222">✓</div><div class="l" style="left:307px;top:382.500px">Show grid</div>
<div class="cb" style="left:297px;top:395.500px"></div><div class="l" style="left:307px;top:395.500px">Show volumes</div>
<div class="cb" style="left:297px;top:409px"></div><div class="l" style="left:307px;top:409px">Show object descriptions</div>

<div class="bt" style="left:312.500px;border:1px solid #444;border-width:1px 1.500px 1.500px 1px">OK</div>
<div class="bt" style="left:356.500px">Cancel</div>
<div class="bt" style="left:400.500px">Reset</div>
</div></body></html>
